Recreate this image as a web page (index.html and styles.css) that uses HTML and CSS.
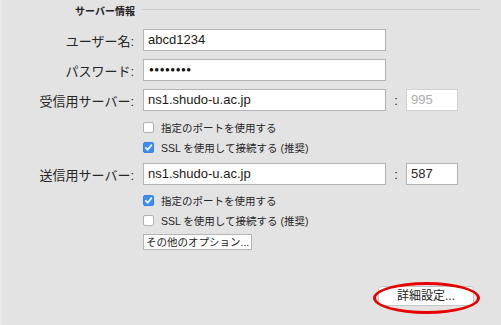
FILE: index.html
```html
<!DOCTYPE html>
<html lang="ja">
<head>
    <meta charset="UTF-8" />
    <title>サーバー情報</title>
    <link rel="stylesheet" href="styles.css">
</head>
<body>
    <div class="panel">
        <div class="group-title">
            <span class="group-name">サーバー情報</span>
            <span class="group-line"></span>
        </div>

        <div class="row first">
            <label class="label">ユーザー名:</label>
            <div class="field">abcd1234</div>
        </div>
        <div class="row">
            <label class="label">パスワード:</label>
            <div class="field dots">&#9679;&#9679;&#9679;&#9679;&#9679;&#9679;&#9679;&#9679;</div>
        </div>
        <div class="row">
            <label class="label">受信用サーバー:</label>
            <div class="field">ns1.shudo-u.ac.jp</div>
            <span class="colon">:</span>
            <div class="port disabled">995</div>
        </div>

        <div class="check first-check">
            <span class="box"></span>
            <span>指定のポートを使用する</span>
        </div>
        <div class="check">
            <span class="box on"><svg viewBox="0 0 12 12"><path d="M3 6.3 L5.1 8.5 L9.2 3.4" /></svg></span>
            <span>SSL を使用して接続する (推奨)</span>
        </div>

        <div class="row smtp">
            <label class="label">送信用サーバー:</label>
            <div class="field">ns1.shudo-u.ac.jp</div>
            <span class="colon">:</span>
            <div class="port">587</div>
        </div>

        <div class="check first-check smtp-check">
            <span class="box on"><svg viewBox="0 0 12 12"><path d="M3 6.3 L5.1 8.5 L9.2 3.4" /></svg></span>
            <span>指定のポートを使用する</span>
        </div>
        <div class="check">
            <span class="box"></span>
            <span>SSL を使用して接続する (推奨)</span>
        </div>

        <div class="options">
            <button class="small-btn">その他のオプション...</button>
        </div>

        <div class="footer">
            <button class="detail-btn">詳細設定...</button>
        </div>
    </div>
</body>
</html>
```

FILE: styles.css
```css
* {
    box-sizing: border-box;
    margin: 0;
    padding: 0;
}

body {
    font-family: "Liberation Sans", "Noto Sans CJK JP", sans-serif;
    background-color: #e3e3e3;
    color: #262626;
    width: 501px;
    height: 325px;
    overflow: hidden;
}

.panel {
    height: 325px;
    border-left: 2px solid #ebebeb;
}

.group-title {
    display: flex;
    align-items: center;
    padding: 4px 21px 0 73px;
    height: 17px;
}

.group-name {
    font-size: 10px;
    font-weight: bold;
    color: #222;
}

.group-line {
    flex: 1;
    height: 1px;
    background-color: #c9c9c9;
    margin-left: 7px;
    margin-top: -3px;
}

.row {
    display: flex;
    align-items: center;
    height: 22px;
    margin-top: 8px;
}

.row.first {
    margin-top: 12px;
}

.label {
    width: 132px;
    text-align: right;
    font-size: 13px;
    margin-right: 9px;
}

.field {
    width: 243px;
    height: 22px;
    background-color: #fff;
    border: 1px solid #b4b4b4;
    font-size: 13px;
    line-height: 20px;
    padding-left: 4px;
    color: #1a1a1a;
}

.dots {
    font-size: 8px;
    letter-spacing: 0.5px;
    padding-left: 5px;
    color: #111;
}

.colon {
    width: 20px;
    text-align: center;
    font-size: 13px;
}

.port {
    width: 52px;
    height: 22px;
    background-color: #fff;
    border: 1px solid #b4b4b4;
    font-size: 13px;
    line-height: 20px;
    padding-left: 4px;
}

.port.disabled {
    border-color: #d2d2d2;
    color: #acacac;
}

.check {
    display: flex;
    align-items: center;
    height: 11px;
    margin-top: 9px;
    margin-left: 141px;
    font-size: 10.5px;
    gap: 7px;
    white-space: nowrap;
}

.check.first-check {
    margin-top: 11px;
}

.check.smtp-check {
    margin-top: 10px;
}

.box {
    width: 11px;
    height: 11px;
    border: 1px solid #b0b0b0;
    border-radius: 2px;
    background-color: #fff;
    display: inline-flex;
}

.box.on {
    background-color: #3b8ef3;
    border-color: #3681e4;
}

.box svg {
    width: 11px;
    height: 11px;
    margin: -1px;
}

.box path {
    fill: none;
    stroke: #fff;
    stroke-width: 1.8;
    stroke-linecap: round;
    stroke-linejoin: round;
}

.row.smtp {
    margin-top: 10px;
}

.options {
    display: flex;
    margin-top: 8px;
    margin-left: 141px;
}

.small-btn {
    font-family: "Liberation Sans", "Noto Sans CJK JP", sans-serif;
    font-size: 10.5px;
    color: #222;
    background-color: #fff;
    border: 1px solid #b4b4b4;
    height: 16px;
    line-height: 14px;
    padding: 0 2px;
    white-space: nowrap;
}

.footer {
    display: flex;
    justify-content: flex-end;
    margin-top: 36px;
    padding-right: 27px;
}

.detail-btn {
    position: relative;
    font-family: "Liberation Sans", "Noto Sans CJK JP", sans-serif;
    font-size: 12px;
    color: #222;
    background-color: #fff;
    border: 1px solid #c6c6c6;
    border-radius: 4px;
    width: 96px;
    height: 20px;
    line-height: 18px;
}

.detail-btn::after {
    content: "";
    position: absolute;
    top: -5px;
    bottom: -9px;
    left: -6px;
    right: -7px;
    border: 3px solid #e60000;
    border-radius: 50%;
}
```
